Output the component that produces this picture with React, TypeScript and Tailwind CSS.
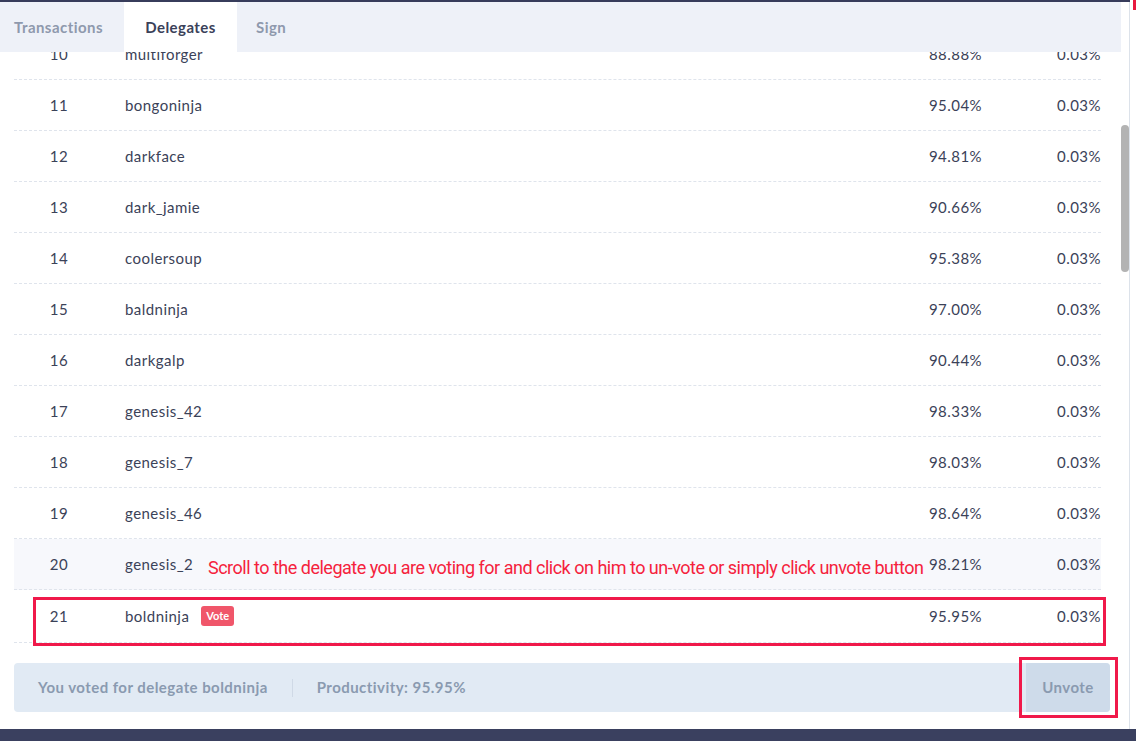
import React from "react";

const rows: [number, string, string, string][] = [
  [10, "multiforger", "88.88%", "0.03%"],
  [11, "bongoninja", "95.04%", "0.03%"],
  [12, "darkface", "94.81%", "0.03%"],
  [13, "dark_jamie", "90.66%", "0.03%"],
  [14, "coolersoup", "95.38%", "0.03%"],
  [15, "baldninja", "97.00%", "0.03%"],
  [16, "darkgalp", "90.44%", "0.03%"],
  [17, "genesis_42", "98.33%", "0.03%"],
  [18, "genesis_7", "98.03%", "0.03%"],
  [19, "genesis_46", "98.64%", "0.03%"],
  [20, "genesis_2", "98.21%", "0.03%"],
  [21, "boldninja", "95.95%", "0.03%"],
];

export default function App() {
  return (
    <div
      className="relative w-[1136px] h-[741px] bg-white flex flex-col overflow-hidden text-[#3b4258]"
      style={{ fontFamily: "Lato, 'Open Sans', sans-serif" }}
    >
      <div className="h-[2px] w-[1130px] bg-[#373c5b] shrink-0" />
      <div className="flex flex-1 min-h-0">
        <div className="w-[1130px] border-r border-[#dce2ea] flex flex-col">
          {/* tabs */}
          <div className="h-[50px] w-[1121px] bg-[#eef1f8] flex text-[15px] tracking-[0.45px] font-bold shrink-0">
            <div className="w-[124px] pl-[14px] flex items-center text-[#8e99ad]">Transactions</div>
            <div className="w-[113px] flex items-center justify-center bg-white text-[#3a4159]">Delegates</div>
            <div className="px-[19px] flex items-center text-[#8e99ad]">Sign</div>
          </div>
          {/* list + scrollbar */}
          <div className="flex">
            <div className="w-[1110px] pl-[14px] pr-[8px] h-[593px] overflow-hidden">
              <div className="mt-[-23px]">
                {rows.map(([n, name, prod, appr]) => (
                  <div
                    key={n}
                    className={`${n === 21 ? "h-[53px]" : "h-[51px]"} flex items-center text-[15px] tracking-[0.45px] border-b border-dashed border-[#dfe4ec] ${
                      n === 20 ? "bg-[#f7f8fc]" : ""
                    }`}
                  >
                    <div className="w-[90px] text-center">{n}</div>
                    <div className="flex-1 pl-[21px] flex items-center">
                      {name}
                      {n === 21 && (
                        <span className="ml-[12px] h-[20px] px-[5px] rounded-[3px] bg-[#f0566a] text-white text-[11px] tracking-normal font-bold flex items-center">
                          Vote
                        </span>
                      )}
                    </div>
                    <div className="w-[120px] text-right">{prod}</div>
                    <div className="w-[119px] text-right">{appr}</div>
                  </div>
                ))}
              </div>
            </div>
            <div className="flex-1">
              <div className="ml-[12px] mt-[73px] w-[8px] h-[147px] rounded-[4px] bg-[#b3b3b3]" />
            </div>
          </div>
          {/* bottom bar */}
          <div className="mt-[18px] ml-[14px] w-[1096px] h-[49px] bg-[#e1eaf4] rounded-[4px] flex items-center text-[15px] tracking-[0.45px] font-bold text-[#8a9ab0]">
            <div className="pl-[24px]">You voted for delegate boldninja</div>
            <div className="mx-[24px] w-px h-[18px] bg-[#cfd9e6]" />
            <div>Productivity: 95.95%</div>
            <div className="ml-auto h-full w-[84px] rounded-r-[4px] bg-[#cedbea] flex items-center justify-center">
              Unvote
            </div>
          </div>
        </div>
        <div className="flex-1 relative">
          <div className="absolute top-[-2px] left-[3px] w-[3px] h-[10px] bg-[#e8193f]" />
        </div>
      </div>
      <div className="h-[12px] bg-[#3a405f] shrink-0" />

      {/* annotations */}
      <div className="absolute left-[33px] top-[597px] w-[1073px] h-[49px] border-[3px] border-[#f0194a]" />
      <div className="absolute left-[1019px] top-[657px] w-[99px] h-[61px] border-[3px] border-[#f0194a]" />
      <div
        className="absolute left-[208px] top-[556px] text-[18px] leading-[24px] text-[#f5223c] whitespace-nowrap tracking-[-0.5px]"
        style={{ fontFamily: "Roboto, sans-serif" }}
      >
        Scroll to the delegate you are voting for and click on him to un-vote or simply click unvote button
      </div>
    </div>
  );
}
